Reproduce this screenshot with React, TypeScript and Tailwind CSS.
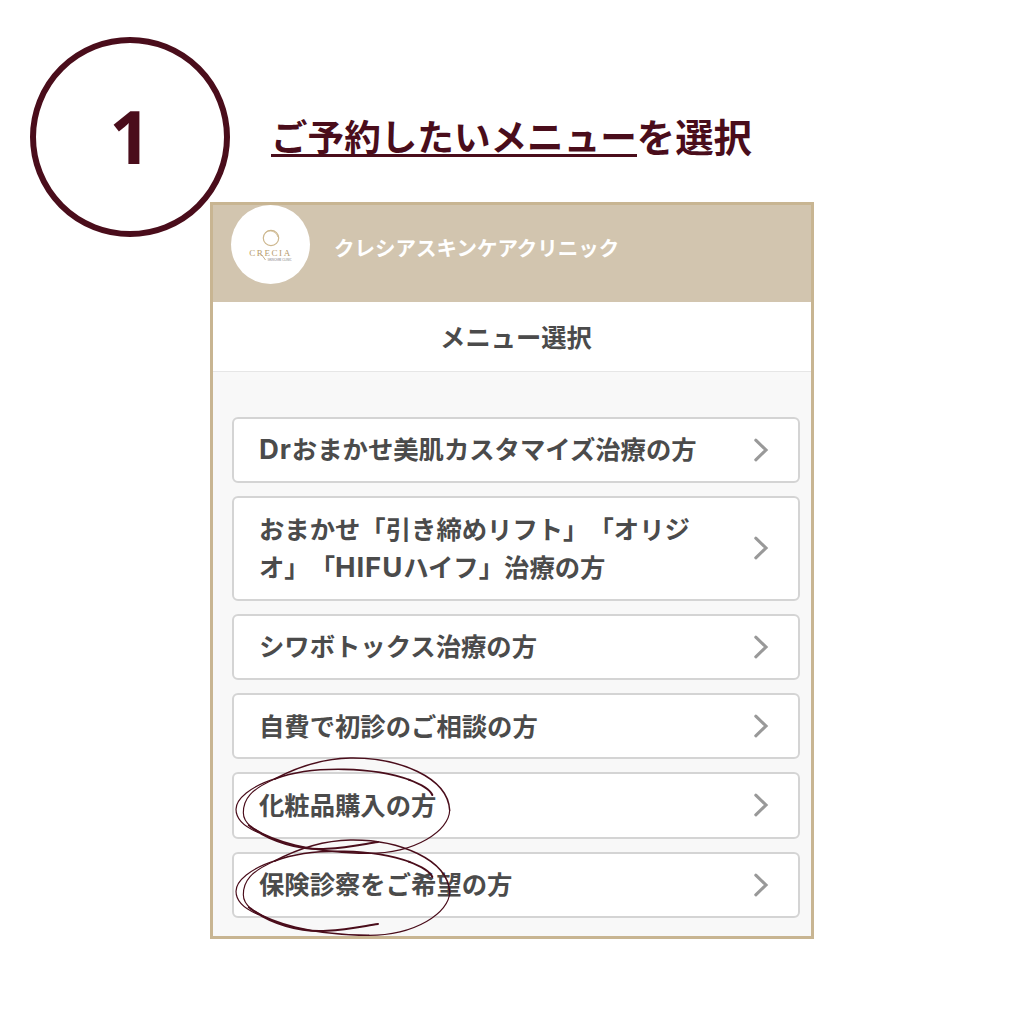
import React from "react";

const CJK = "font-['Noto_Sans_CJK_JP',sans-serif]";

function Latin({ children }: { children: string }) {
  return (
    <span className="font-['Inter',sans-serif] text-[27.5px] font-bold leading-none tracking-[0.9px]">{children}</span>
  );
}

function Scribble({ place }: { place: string }) {
  return (
    <svg
      className={`pointer-events-none absolute left-[-2px] z-10 h-[100px] w-[220px] ${place}`}
      viewBox="0 0 660 300"
      fill="none"
      stroke="#4a0d1b"
      strokeLinecap="round"
    >
      <path strokeWidth="6" d="M601 123C594 107 570 92 530 77" />
      <path strokeWidth="5" d="M534 78C430 40 245 32 130 74" />
      <path strokeWidth="3.5" d="M130 74C55 97 12 135 12 166C12 198 45 222 80 236" />
      <path strokeWidth="5" d="M50 214C115 262 240 297 410 298" />
      <path strokeWidth="3.5" d="M410 298C550 298 652 230 653 169" />
      <path strokeWidth="4.5" d="M653 169C648 70 500 10 355 12C265 14 190 42 128 75" />
      <path strokeWidth="3.5" d="M128 75C55 107 34 136 34 176C34 191 44 207 57 218" />
      <path strokeWidth="6" d="M57 218C112 262 205 290 285 284C350 281 396 270 438 264" />
    </svg>
  );
}

type Item = { label: React.ReactNode; tall?: boolean; mark?: string };

const items: Item[] = [
  { label: <><Latin>Dr</Latin>おまかせ美肌カスタマイズ治療の方</> },
  { label: <>おまかせ「引き締めリフト」「オリジ<br />オ」「<Latin>HIFU</Latin>ハイフ」治療の方</>, tall: true },
  { label: "シワボトックス治療の方" },
  { label: "自費で初診のご相談の方" },
  { label: "化粧品購入の方", mark: "top-[-20.5px]" },
  { label: "保険診察をご希望の方", mark: "top-[-17.5px]" },
];

function MenuCard({ item }: { item: Item }) {
  return (
    <div
      className={`relative flex w-[568px] shrink-0 items-center justify-between rounded-[6px] border-2 border-[#d4d4d4] bg-white pl-[25px] pr-[29px] ${item.tall ? "h-[104.7px]" : "h-[66.4px]"}`}
    >
      <span className="-mt-[3px] whitespace-nowrap text-[25.35px] font-bold leading-[38px] text-[#4b4b4b] [text-spacing-trim:space-all]">
        {item.label}
      </span>
      <svg className="h-[24px] w-[16px] shrink-0" viewBox="0 0 16 24" fill="none" stroke="#999999" strokeWidth="3.1">
        <path d="M2.8 2.2L13 12L2.8 21.8" strokeLinecap="round" />
      </svg>
      {item.mark && <Scribble place={item.mark} />}
    </div>
  );
}

export default function App() {
  return (
    <div className={`h-[1024px] w-[1024px] overflow-hidden bg-white ${CJK}`}>
      <div className="flex h-[202px] pl-[30px] pt-[37px]">
        <div className="relative z-10 flex h-[200px] w-[200px] shrink-0 items-center justify-center rounded-full border-[6px] border-[#4a0d1b] pb-[4px] font-['Open_Sans',sans-serif] text-[73px] font-bold leading-none text-[#4a0d1b]">
          1
        </div>
        <h1 className="ml-[41px] mt-[72px] flex h-[54px] whitespace-nowrap text-[36.6px] font-bold leading-[54px] text-[#4a0d1b]">
          <span className="h-[48px] border-b-[3px] border-[#4a0d1b]">ご予約したいメニュー</span>
          <span className="-mt-px text-[38.4px]">を選択</span>
        </h1>
      </div>
      <div className="ml-[210px] h-[737px] w-[604px] border-[3px] border-[#c8b592] bg-[#f8f8f8]">
        <div className="flex h-[97px] bg-[#d2c5af] pl-[18px]">
          <div className="flex h-[79px] w-[79px] flex-col items-center rounded-full bg-white pt-[24px]">
            <svg className="h-[18px] w-[18px]" viewBox="0 0 18 18" fill="none" stroke="#cdb78e">
              <circle cx="9" cy="9" r="7.7" strokeWidth="1.2" />
              <path d="M3 4C7 0 14 2 16 8" strokeWidth="0.8" />
            </svg>
            <div className="relative mt-px font-['Liberation_Serif',serif] text-[9px] leading-[10px] tracking-[1.6px] text-[#b69b6b]">
              CRECIA
              <svg className="absolute left-[12px] top-[6px] h-[7px] w-[6px]" viewBox="0 0 6 7" fill="none" stroke="#b69b6b">
                <path d="M0.5 0.5L4.5 6" strokeWidth="0.8" />
              </svg>
            </div>
            <div className="ml-[18px] text-[3px] leading-[4px] text-[#777777]">SKINCARE CLINIC</div>
          </div>
          <div className="ml-[24px] mt-[27px] text-[20.5px] font-bold leading-[30px] text-white">クレシアスキンケアクリニック</div>
        </div>
        <div className="flex h-[70px] items-center justify-center border-b border-[#e6e6e6] bg-white pl-[8px] text-[25.3px] font-bold text-[#4b4b4b]">
          メニュー選択
        </div>
        <div className="flex flex-col gap-[12.9px] pl-[19px] pt-[44.8px]">
          {items.map((item, i) => (
            <MenuCard key={i} item={item} />
          ))}
        </div>
      </div>
    </div>
  );
}
